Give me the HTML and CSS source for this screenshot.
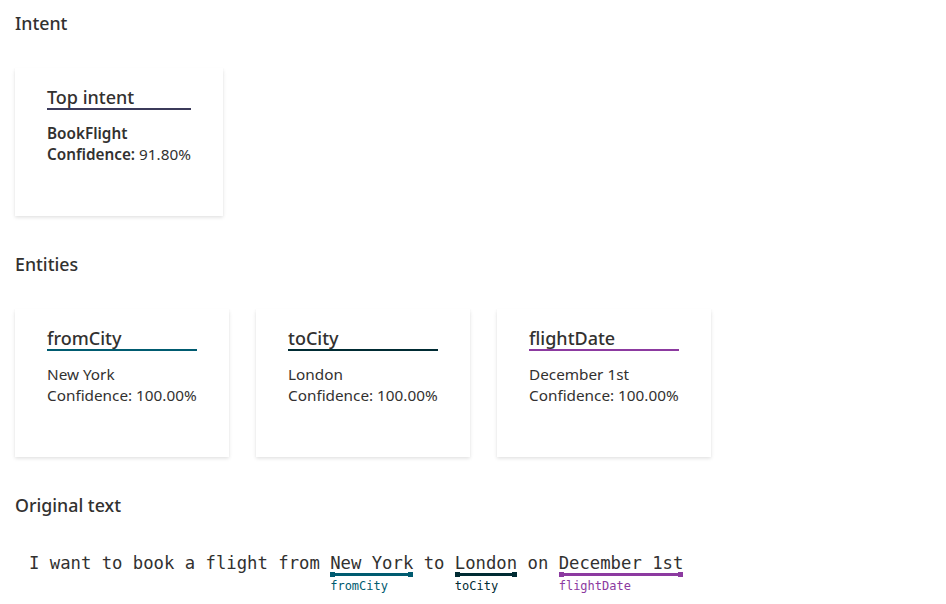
FILE: index.html
```html
<!DOCTYPE html>
<html lang="en">
<head>
    <meta charset="UTF-8">
    <title>Prediction result</title>
    <link rel="stylesheet" href="styles.css">
</head>
<body>
    <div class="section">
        <h2 class="section-title">Intent</h2>
        <div class="cards">
            <div class="card intent-card">
                <div class="card-title title-intent">Top intent</div>
                <div class="card-body">
                    <div class="strong">BookFlight</div>
                    <div><span class="strong">Confidence:</span> 91.80%</div>
                </div>
            </div>
        </div>
    </div>

    <div class="section">
        <h2 class="section-title">Entities</h2>
        <div class="cards">
            <div class="card">
                <div class="card-title title-from">fromCity</div>
                <div class="card-body">
                    <div>New York</div>
                    <div>Confidence: 100.00%</div>
                </div>
            </div>
            <div class="card">
                <div class="card-title title-to">toCity</div>
                <div class="card-body">
                    <div>London</div>
                    <div>Confidence: 100.00%</div>
                </div>
            </div>
            <div class="card">
                <div class="card-title title-date">flightDate</div>
                <div class="card-body">
                    <div>December 1st</div>
                    <div>Confidence: 100.00%</div>
                </div>
            </div>
        </div>
    </div>

    <div class="section">
        <h2 class="section-title">Original text</h2>
        <div class="utterance">
            <span class="plain">I want to book a flight from </span>
            <span class="entity from">
                <span class="word">New York</span>
                <span class="bar"></span>
                <span class="label">fromCity</span>
            </span>
            <span class="plain"> to </span>
            <span class="entity to">
                <span class="word">London</span>
                <span class="bar"></span>
                <span class="label">toCity</span>
            </span>
            <span class="plain"> on </span>
            <span class="entity date">
                <span class="word">December 1st</span>
                <span class="bar"></span>
                <span class="label">flightDate</span>
            </span>
        </div>
    </div>
</body>
</html>
```

FILE: styles.css
```css
body {
    margin: 0;
    padding: 11px 15px 0 15px;
    font-family: "Noto Sans", "Open Sans", sans-serif;
    color: #323130;
    background: #ffffff;
}
.section {
    margin-bottom: 36px;
}
.section-title {
    margin: 0 0 33px 0;
    font-size: 17.8px;
    line-height: 24px;
    font-weight: 500;
    color: #323130;
}
.cards {
    display: flex;
    gap: 27px;
}
.card {
    width: 214px;
    height: 148px;
    box-sizing: border-box;
    padding: 18px 32px 0 32px;
    background: #ffffff;
    box-shadow: 0 1.6px 3.6px rgba(0, 0, 0, 0.13), 0 0.3px 0.9px rgba(0, 0, 0, 0.11);
}
.intent-card {
    width: 208px;
}
.card-title {
    font-size: 18px;
    line-height: 22px;
    font-weight: 500;
    border-bottom: 2px solid #3b3a5a;
}
.title-from { border-bottom-color: #005b70; }
.title-to { border-bottom-color: #002b33; }
.title-date { border-bottom-color: #8c3aa0; }
.card-body {
    margin-top: 13px;
    font-size: 15.3px;
    line-height: 21px;
}
.strong {
    font-weight: 600;
}
.utterance {
    display: flex;
    align-items: flex-start;
    padding: 5px 0 0 14px;
    font-family: "DejaVu Sans Mono", "Liberation Mono", monospace;
    font-size: 17.25px;
    line-height: 17px;
    color: #323130;
}
.plain {
    white-space: pre;
}
.entity {
    display: flex;
    flex-direction: column;
    white-space: pre;
}
.bar {
    position: relative;
    height: 3px;
    margin: 1px 0;
    background: #005b70;
}
.bar::before, .bar::after {
    content: "";
    position: absolute;
    top: -1px;
    width: 5px;
    height: 5px;
    background: inherit;
}
.bar::before { left: 0; }
.bar::after { right: 0; }
.label {
    margin-top: 2px;
    font-size: 12px;
    line-height: 14px;
    color: #005b70;
}
.to .bar { background: #002b33; }
.to .label { color: #002b33; }
.date .bar { background: #8c3aa0; }
.date .label { color: #8c3aa0; }
```
